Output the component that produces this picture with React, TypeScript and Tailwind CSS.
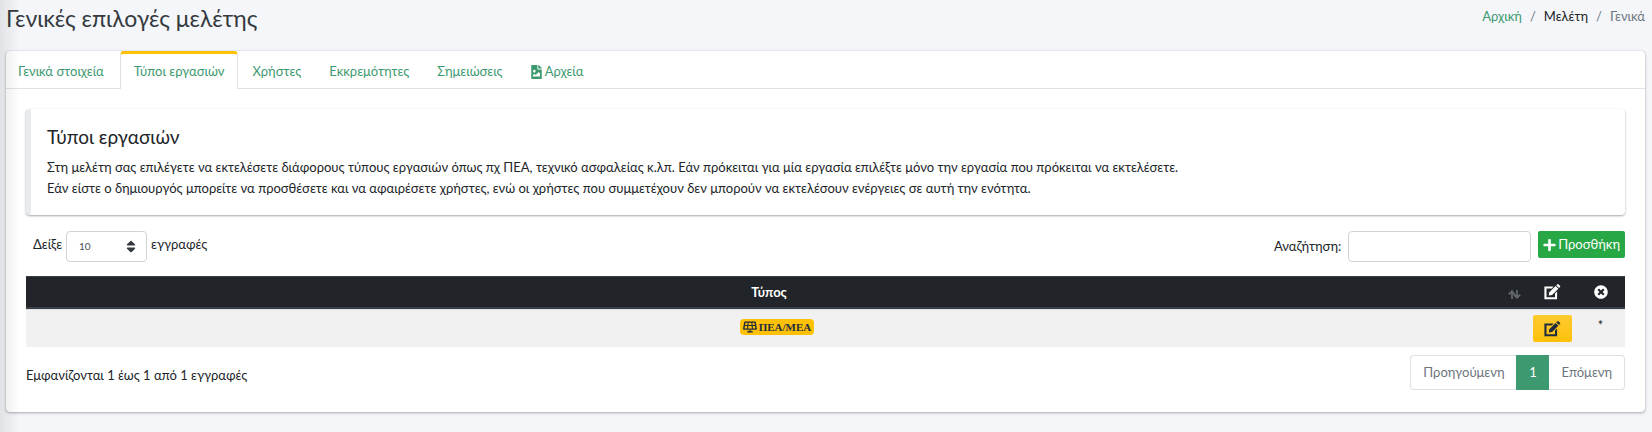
import React from "react";
import { FaPlus, FaSolarPanel, FaFileImage, FaTimesCircle, FaSort } from "react-icons/fa";

interface ITab {
  label: string;
  active?: boolean;
  icon?: React.ReactNode;
}

const tabs: ITab[] = [
  { label: "Γενικά στοιχεία" },
  { label: "Τύποι εργασιών", active: true },
  { label: "Χρήστες" },
  { label: "Εκκρεμότητες" },
  { label: "Σημειώσεις" },
  { label: "Αρχεία", icon: <FaFileImage className="h-[14px] w-[11px]" /> },
];

const SortIcon: React.FC = () => (
  <svg width="13" height="9" viewBox="0 0 13 9" fill="none" stroke="currentColor" strokeWidth="1.8">
    <path d="M4 9V1M0.8 4.4L4 1.2L9 7.8M9 0V8M5.8 4.6L9 7.8L12.2 4.6" />
  </svg>
);

const EditIcon: React.FC = () => (
  <svg width="17" height="16" viewBox="0 0 17 16" fill="currentColor" className="mx-auto">
    <path d="M0.4 2.6H9.6L7.8 4.6H2.5V13.2H11V9.6L13.1 7.5V15.2H0.4Z" />
    <path d="M4.7 11.5L5.3 8.2L11.6 1.9L14.4 4.7L8.1 11L4.9 11.6Z" />
    <path d="M12.2 1.3L13.2 0.4Q13.9 -0.2 14.6 0.4L16 1.8Q16.5 2.4 16 3.1L15 4.1Z" />
  </svg>
);

const PageHeader: React.FC = () => (
  <header className="flex items-start justify-between">
    <h1 className="pt-[3px] text-[23px] leading-[30px] text-[#343a40]">Γενικές επιλογές μελέτης</h1>
    <nav aria-label="breadcrumb">
      <ol className="flex gap-2 pt-1.5 leading-[21px] text-[#6c757d]">
        <li><a href="#" className="text-[#3d9970]">Αρχική</a></li>
        <li>/</li>
        <li><a href="#" className="text-[#212529]">Μελέτη</a></li>
        <li>/</li>
        <li>Γενικά</li>
      </ol>
    </nav>
  </header>
);

const Tabs: React.FC = () => (
  <nav className="flex h-[38px] border-b border-[#dee2e6]">
    {tabs.map((tab) => (
      <a
        key={tab.label}
        href="#"
        className={
          tab.active
            ? "-mb-px flex items-center rounded-t border-x border-t-[3px] border-x-[#dee2e6] border-t-[#ffc107] bg-white px-[13px] text-[#3d9970]"
            : "flex items-center gap-[3px] px-[14px] pt-1 text-[#3d9970] first:pr-4 first:pl-3"
        }
      >
        {tab.icon}
        {tab.label}
      </a>
    ))}
  </nav>
);

const Callout: React.FC = () => (
  <section className="rounded border-l-[5px] border-[#e9ecef] bg-white p-4 shadow-[0_1px_3px_rgba(0,0,0,0.12),0_1px_2px_rgba(0,0,0,0.24)]">
    <h5 className="mb-2 text-[19px] leading-6">Τύποι εργασιών</h5>
    <p className="leading-[21px]">
      Στη μελέτη σας επιλέγετε να εκτελέσετε διάφορους τύπους εργασιών όπως πχ ΠΕΑ, τεχνικό ασφαλείας κ.λπ. Εάν πρόκειται για μία εργασία επιλέξτε μόνο την εργασία που πρόκειται να εκτελέσετε.
      <br />
      Εάν είστε ο δημιουργός μπορείτε να προσθέσετε και να αφαιρέσετε χρήστες, ενώ οι χρήστες που συμμετέχουν δεν μπορούν να εκτελέσουν ενέργειες σε αυτή την ενότητα.
    </p>
  </section>
);

const Toolbar: React.FC = () => (
  <div className="mt-4 flex items-start justify-between">
    <div className="flex items-center gap-1 pl-[7px]">
      <label htmlFor="length" className="pb-1">Δείξε</label>
      <div className="relative">
        <select
          id="length"
          className="block h-[31px] w-[81px] appearance-none rounded border border-[#ced4da] bg-white pl-3 text-[10px] text-[#495057]"
        >
          <option>10</option>
          <option>25</option>
          <option>50</option>
        </select>
        <FaSort className="pointer-events-none absolute top-2 right-2.5 h-[15px] w-3 text-[#343a40]" />
      </div>
      <span className="pb-1">εγγραφές</span>
    </div>
    <div className="flex items-start gap-[7px]">
      <label htmlFor="search" className="leading-[31px]">Αναζήτηση:</label>
      <input id="search" type="search" className="h-[31px] w-[183px] rounded border border-[#ced4da] bg-white px-2" />
      <button type="button" className="flex h-[27px] items-center gap-0.5 rounded-[2px] bg-[#28a745] px-[5px] text-white">
        <FaPlus className="h-[14px] w-[13px]" />
        Προσθήκη
      </button>
    </div>
  </div>
);

const WorkTypesTable: React.FC = () => (
  <table className="mt-3.5 w-full table-fixed border-separate border-spacing-0 text-center">
    <thead className="bg-[#212529] text-white">
      <tr className="h-[33px]">
        <th className="border-t border-b-2 border-[#383f45] p-0">
          <div className="flex items-center pr-[7px]">
            <span className="flex-1 pt-0.5 pl-1">Τύπος</span>
            <span className="pt-1 text-[#63676a]"><SortIcon /></span>
          </div>
        </th>
        <th className="w-12 border-t border-b-2 border-[#383f45] p-0" aria-label="Επεξεργασία">
          <EditIcon />
        </th>
        <th className="w-[49px] border-t border-b-2 border-[#383f45] p-0" aria-label="Διαγραφή">
          <FaTimesCircle className="mx-auto size-[14px]" />
        </th>
      </tr>
    </thead>
    <tbody className="bg-[#f1f1f1]">
      <tr className="h-[38px] align-top">
        <td className="border-t border-[#dee2e6] p-0 pt-[9px]">
          <span className="inline-flex h-4 items-center gap-0.5 rounded bg-[#ffc107] px-[3px] font-['Liberation_Serif',serif] text-[11px] font-bold text-[#1f2d3d]">
            <FaSolarPanel className="h-3 w-[14px]" />
            ΠΕΑ/ΜΕΑ
          </span>
        </td>
        <td className="border-t border-[#dee2e6] p-0 pt-[5px]">
          <button
            type="button"
            aria-label="Επεξεργασία"
            className="mx-auto flex h-[27px] w-[39px] items-center justify-center rounded-[2px] bg-linear-to-b from-[#ffca2c] to-[#ffc107] text-[#1f2d3d]"
          >
            <EditIcon />
          </button>
        </td>
        <td className="border-t border-[#dee2e6] p-0 pt-1.5">*</td>
      </tr>
    </tbody>
  </table>
);

const TableFooter: React.FC = () => (
  <div className="mt-2 flex justify-between">
    <p className="pt-2.5 leading-[21px]">Εμφανίζονται 1 έως 1 από 1 εγγραφές</p>
    <nav className="flex h-[35px] text-[#6c757d]" aria-label="pagination">
      <button type="button" className="rounded-l border border-r-0 border-[#dee2e6] px-3">Προηγούμενη</button>
      <button type="button" className="w-[33px] bg-[#3d9970] text-white">1</button>
      <button type="button" className="rounded-r border border-l-0 border-[#dee2e6] px-3">Επόμενη</button>
    </nav>
  </div>
);

const App: React.FC = () => {
  return (
    <div className="relative min-h-screen bg-[#f4f6f9] pr-[7px] pb-5 pl-1.5 font-[Lato,'Noto_Sans',sans-serif] text-[13px] text-[#212529]">
      <PageHeader />
      <main className="mt-[18px] rounded bg-white shadow-[0_0_1px_rgba(0,0,0,0.25),0_1px_3px_rgba(0,0,0,0.3)]">
        <Tabs />
        <div className="px-5 pt-5 pb-[22px]">
          <Callout />
          <Toolbar />
          <WorkTypesTable />
          <TableFooter />
        </div>
      </main>
      {/* shadow cast by the sidebar */}
      <div className="pointer-events-none absolute inset-y-0 left-0 w-5 bg-linear-to-r from-black/8 to-transparent" />
    </div>
  );
};

export default App;
